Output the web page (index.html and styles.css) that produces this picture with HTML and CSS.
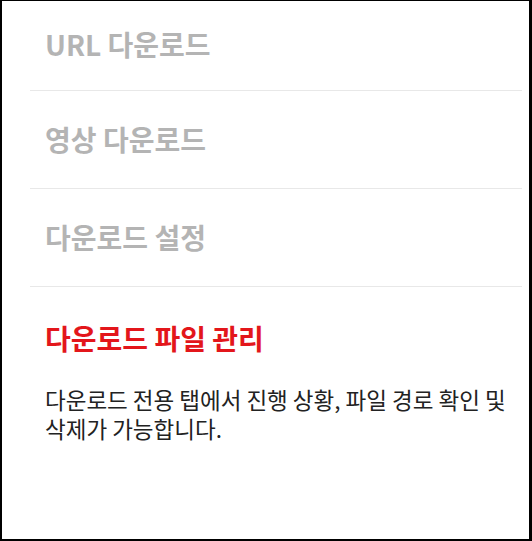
FILE: index.html
```html
<!DOCTYPE html>
<html>

<head>
    <title>다운로드 기능</title>
    <meta charset="UTF-8">
    <meta name="viewport" content="width=device-width, initial-scale=1.0">
    <link rel="stylesheet" href="styles.css">
</head>

<body>
    <div class="frame">
        <ul class="features">
            <li class="feature">
                <h3 class="feature-title">URL 다운로드</h3>
            </li>
            <li class="feature">
                <h3 class="feature-title">영상 다운로드</h3>
            </li>
            <li class="feature">
                <h3 class="feature-title">다운로드 설정</h3>
            </li>
            <li class="feature active">
                <h3 class="feature-title">다운로드 파일 관리</h3>
                <p class="feature-desc">다운로드 전용 탭에서 진행 상황, 파일 경로 확인 및 삭제가 가능합니다.</p>
            </li>
        </ul>
    </div>
</body>

</html>
```

FILE: styles.css
```css
html,
body {
    margin: 0;
    height: 100%;
}

body {
    font-family: "Noto Sans CJK KR", "Noto Sans", sans-serif;
    background-color: #fff;
}

.frame {
    box-sizing: border-box;
    height: 541px;
    border-style: solid;
    border-color: #000;
    border-width: 1px 3px 2px 2px;
    padding: 0 7px 0 28px;
    overflow: hidden;
}

.features {
    list-style: none;
    margin: 0;
    padding: 0;
}

.feature {
    height: 97px;
    padding: 0 15px;
    display: flex;
    align-items: center;
    border-bottom: 1px solid #e8e8e8;
}

.feature:first-child {
    height: 87px;
    padding-bottom: 2px;
}

.feature-title {
    margin: 0;
    font-size: 28px;
    line-height: 37px;
    font-weight: 700;
    color: #b4b4b4;
}

.feature.active {
    height: auto;
    display: block;
    border-bottom: none;
    padding-top: 33px;
}

.feature.active .feature-title {
    color: #e3161b;
}

.feature-desc {
    margin: 28px 0 0;
    font-size: 22.5px;
    line-height: 29px;
    color: #222;
}
```
